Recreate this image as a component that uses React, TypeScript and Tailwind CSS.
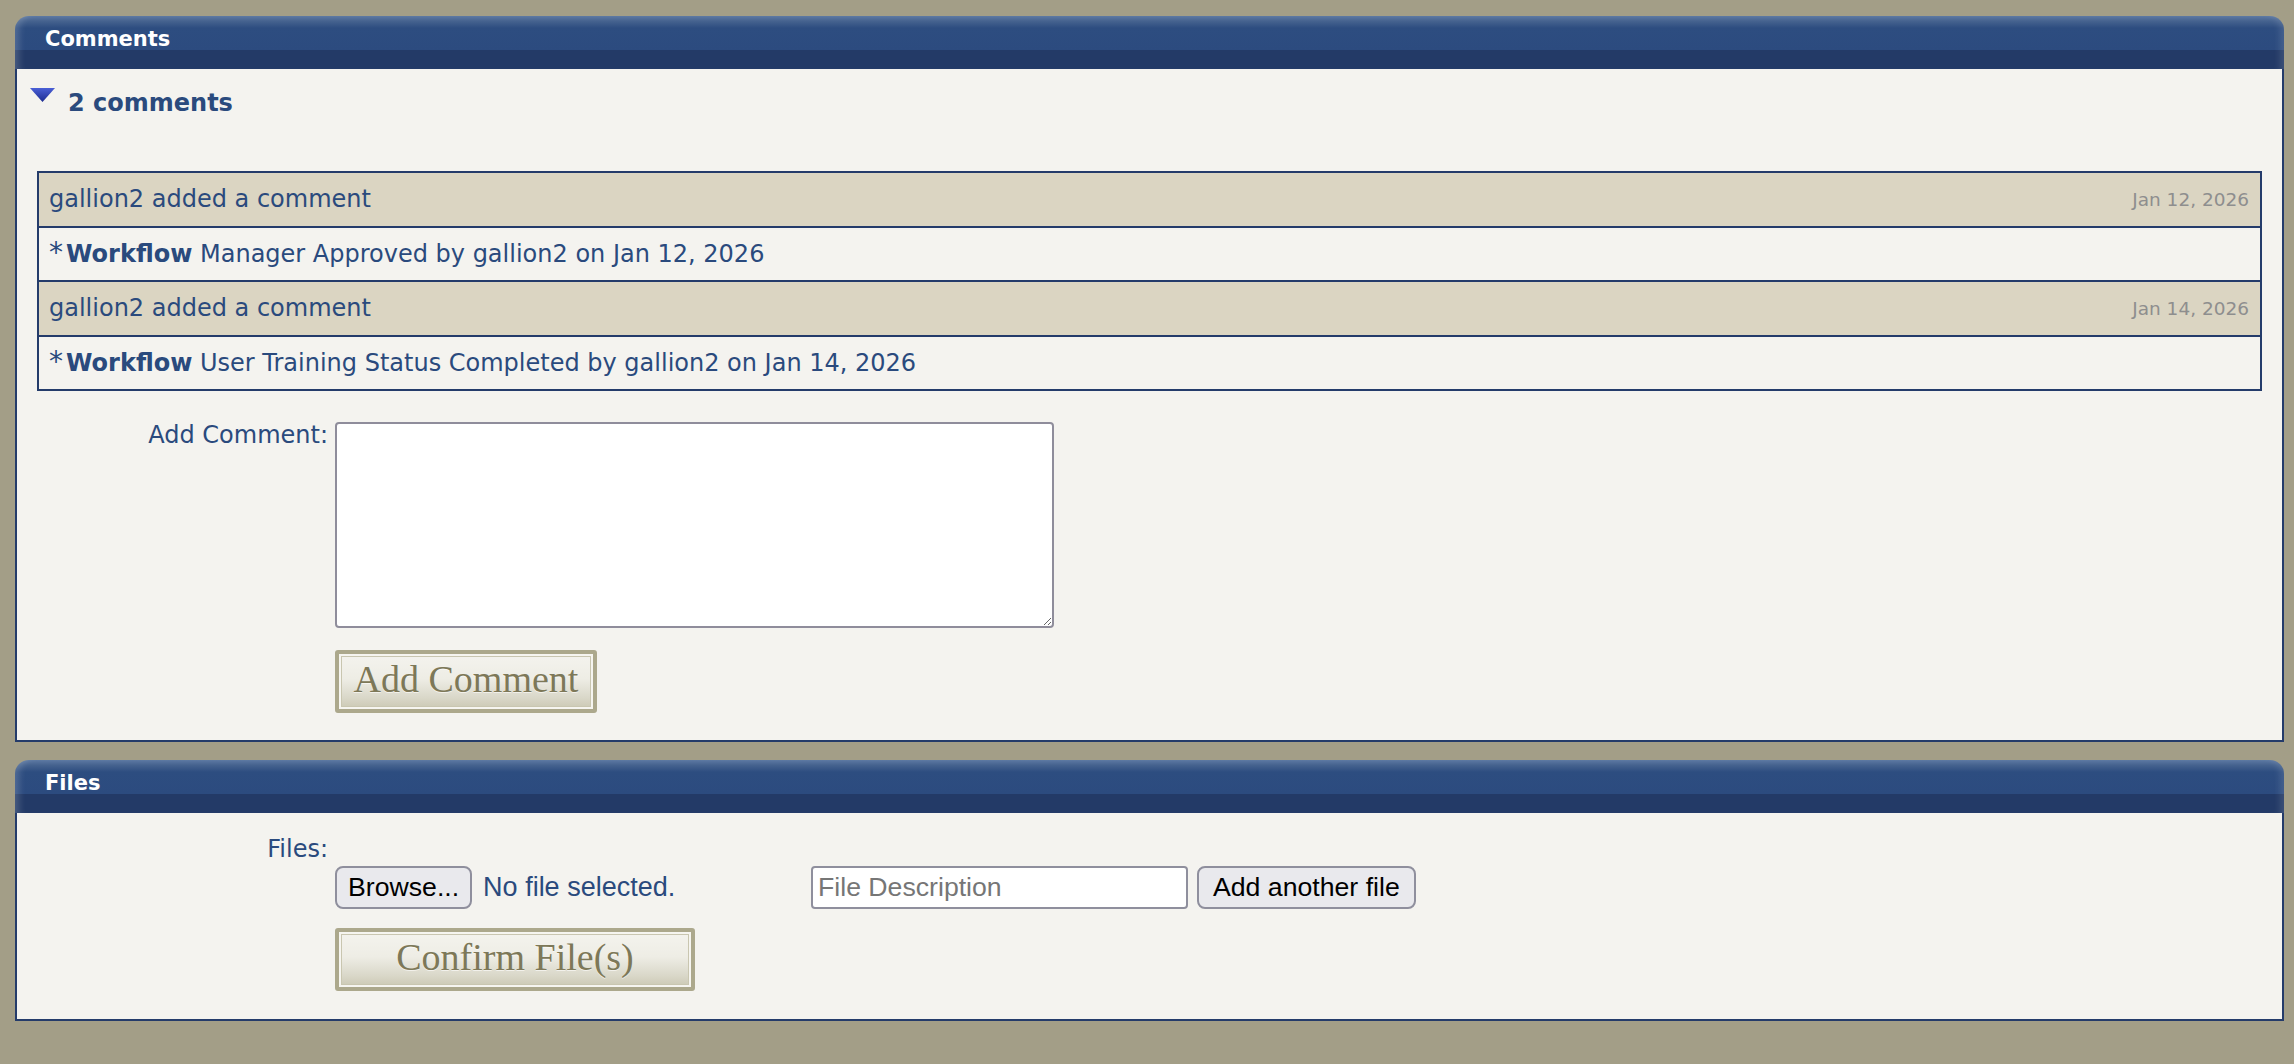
import React from 'react';

const font = { fontFamily: '"DejaVu Sans", Verdana, sans-serif' };

function PanelHeader({ title }: { title: string }) {
  return (
    <div className="h-[53px] rounded-t-[14px] bg-[linear-gradient(to_bottom,#5d79a3_0px,#46638f_5px,#2d4d80_12px,#2c4b7f_34px,#233a67_34px,#233a67_53px)] shadow-[inset_9px_0_7px_-5px_rgba(255,255,255,0.18),inset_-9px_0_7px_-5px_rgba(255,255,255,0.12)] pl-[30px] pt-[11px]">
      <span className="text-[21px] font-bold text-white leading-[1.164]">{title}</span>
    </div>
  );
}

function OldButton({ label, width }: { label: string; width: string }) {
  return (
    <button
      type="button"
      className={`${width} h-[63px] flex items-center justify-center rounded-[3px] border-[4px] border-[#aca88c] bg-[linear-gradient(to_bottom,#f4f3ee_0%,#eeede5_45%,#d9d7c8_80%,#cbc8b3_100%)] shadow-[inset_0_0_0_2px_#f6f5f0,inset_0_0_0_3px_#c9c6b0] pb-[4px] text-[38px] leading-none text-[#7d7858] [text-shadow:0_1px_0_rgba(255,255,255,0.6)]`}
      style={{ fontFamily: '"Liberation Serif", "Times New Roman", serif' }}
    >
      {label}
    </button>
  );
}

const comments = [
  { date: 'Jan 12, 2026', text: 'Manager Approved by gallion2 on Jan 12, 2026' },
  { date: 'Jan 14, 2026', text: 'User Training Status Completed by gallion2 on Jan 14, 2026' },
];

export default function App() {
  return (
    <div className="min-h-screen bg-[#a39e87] pt-4 pl-[15px] pr-[10px] pb-10 text-[#2a4a7d]" style={font}>
      {/* Comments panel */}
      <div>
        <PanelHeader title="Comments" />
        <div className="border-2 border-t-0 border-[#243b6a] bg-[#f4f3ef] pb-[27px]">
          <div className="flex items-start pt-[19px] pl-[13px]">
            <svg width="25" height="14" viewBox="0 0 25 14" className="shrink-0">
              <defs>
                <linearGradient id="tri" x1="0" y1="0" x2="0" y2="1">
                  <stop offset="0" stopColor="#4a5fd6" />
                  <stop offset="1" stopColor="#1b2b8f" />
                </linearGradient>
              </defs>
              <polygon points="0,0 25,0 12.5,14" fill="url(#tri)" />
            </svg>
            <span className="ml-[13px] mt-[2px] text-[24px] font-bold leading-[1.164]">2 comments</span>
          </div>

          <div className="mx-5 mt-[53px] border-2 border-[#243b6a]">
            {comments.map((c, i) => (
              <div key={i}>
                <div className={`flex items-center justify-between bg-[#dbd5c2] pl-[10px] pr-[11px] ${i > 0 ? 'h-[55px] border-t-2 border-[#243b6a]' : 'h-[53px]'}`}>
                  <span className="text-[24px]">gallion2 added a comment</span>
                  <span className="text-[18.5px] text-[#8e8e8e]">{c.date}</span>
                </div>
                <div className="flex h-[54px] items-center border-t-2 border-[#243b6a] bg-[#f4f3ef] pl-[10px]">
                  <span className="text-[24px]">
                    <span className="inline-block w-[17px] text-[28px] leading-none">*</span>
                    <b>Workflow</b> {c.text}
                  </span>
                </div>
              </div>
            ))}
          </div>

          <div className="mt-[31px] flex items-start">
            <label className="w-[311px] text-right text-[24px] leading-[1.164]">Add Comment:</label>
            <div className="ml-[7px]">
              <textarea className="block h-[206px] w-[719px] rounded-[4px] border-2 border-[#8f8d9b] bg-white" />
              <div className="mt-[22px]">
                <OldButton label="Add Comment" width="w-[262px]" />
              </div>
            </div>
          </div>
        </div>
      </div>

      {/* Files panel */}
      <div className="mt-[18px]">
        <PanelHeader title="Files" />
        <div className="border-2 border-t-0 border-[#243b6a] bg-[#f4f3ef] pt-[23px] pb-[28px]">
          <div className="w-[311px] text-right text-[24px] leading-[1.164]">Files:</div>
          <div className="ml-[318px] mt-[2px] flex items-center" style={{ fontFamily: '"Liberation Sans", Arial, sans-serif' }}>
            <div className="flex w-[470px] items-center">
              <button type="button" className="h-[43px] rounded-[8px] border-2 border-[#8f8f9d] bg-[#e9e9ed] px-[11px] text-[26.67px] leading-none text-black">
                Browse...
              </button>
              <span className="ml-[11px] text-[27px]">No file selected.</span>
            </div>
            <input
              type="text"
              placeholder="File Description"
              className="ml-[6px] h-[43px] w-[377px] rounded-[4px] border-2 border-[#8f8f9d] bg-white pl-[5px] text-[26.67px] text-black placeholder:text-[#767676]"
            />
            <button type="button" className="ml-[9px] h-[43px] rounded-[8px] border-2 border-[#8f8f9d] bg-[#e9e9ed] px-[14px] text-[26.67px] leading-none text-black">
              Add another file
            </button>
          </div>
          <div className="ml-[318px] mt-[19px]">
            <OldButton label="Confirm File(s)" width="w-[360px]" />
          </div>
        </div>
      </div>
    </div>
  );
}
